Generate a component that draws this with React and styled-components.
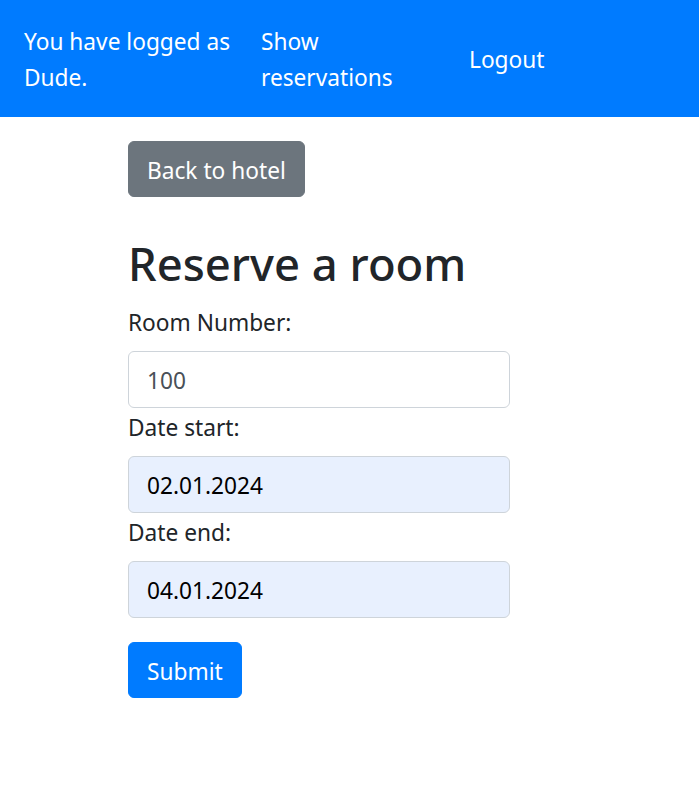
import styled, { createGlobalStyle } from 'styled-components'

const GlobalStyle = createGlobalStyle`
  html, body {
    margin: 0;
    padding: 0;
    background: #ffffff;
  }
  body {
    font-family: "Noto Sans", "Liberation Sans", sans-serif;
    font-size: 22.7px;
    line-height: 36px;
    color: #212529;
  }
  * {
    box-sizing: border-box;
  }
`

const NavBar = styled.nav`
  display: flex;
  align-items: center;
  background: #007bff;
  padding: 13px 24px 12px;
  color: #ffffff;
`

const NavItem = styled.div`
  width: ${({ $width }) => $width}px;
  padding: 11px 0 9px;
  flex-shrink: 0;
`

const NavText = styled.span`
  display: block;
  max-width: ${({ $max }) => $max}px;
`

const NavLink = styled.a`
  color: #ffffff;
  text-decoration: none;
  cursor: pointer;
`

const Main = styled.main`
  padding: 24px 0 0 128px;
`

const Button = styled.button`
  display: inline-block;
  font-family: inherit;
  font-size: 22.7px;
  line-height: 36px;
  padding: 11px 18px 7px;
  border: 1px solid ${({ $variant }) => ($variant === 'secondary' ? '#6c757d' : '#007bff')};
  background: ${({ $variant }) => ($variant === 'secondary' ? '#6c757d' : '#007bff')};
  color: #ffffff;
  border-radius: 6px;
  cursor: pointer;
`

const Title = styled.h2`
  margin: 38px 0 12px;
  font-size: 45.4px;
  line-height: 57.6px;
  font-weight: 500;
  color: #212529;
`

const Form = styled.form`
  display: flex;
  flex-direction: column;
  align-items: flex-start;
  width: 382px;
`

const Label = styled.label`
  display: block;
  margin-bottom: 10px;
`

const Input = styled.input`
  display: block;
  width: 382px;
  height: 57px;
  padding: 10px 18px 8px;
  font-family: inherit;
  font-size: 22.7px;
  line-height: 36px;
  color: ${({ $filled }) => ($filled ? '#000000' : '#495057')};
  background: ${({ $filled }) => ($filled ? '#e8f0fe' : '#ffffff')};
  border: 1px solid #ced4da;
  border-radius: 6px;
  margin-bottom: 2px;
  outline: none;
`

const SubmitRow = styled.div`
  margin-top: 22px;
`

export default function App() {
  return (
    <>
      <GlobalStyle />
      <NavBar>
        <NavItem $width={237}>
          <NavText $max={215}>You have logged as Dude.</NavText>
        </NavItem>
        <NavItem $width={208}>
          <NavLink><NavText $max={170}>Show reservations</NavText></NavLink>
        </NavItem>
        <NavItem $width={120}>
          <NavLink>Logout</NavLink>
        </NavItem>
      </NavBar>
      <Main>
        <Button $variant="secondary">Back to hotel</Button>
        <Title>Reserve a room</Title>
        <Form onSubmit={(e) => e.preventDefault()}>
          <Label htmlFor="room">Room Number:</Label>
          <Input id="room" defaultValue="100" />
          <Label htmlFor="start">Date start:</Label>
          <Input id="start" $filled defaultValue="02.01.2024" />
          <Label htmlFor="end">Date end:</Label>
          <Input id="end" $filled defaultValue="04.01.2024" />
          <SubmitRow>
            <Button type="submit">Submit</Button>
          </SubmitRow>
        </Form>
      </Main>
    </>
  )
}
